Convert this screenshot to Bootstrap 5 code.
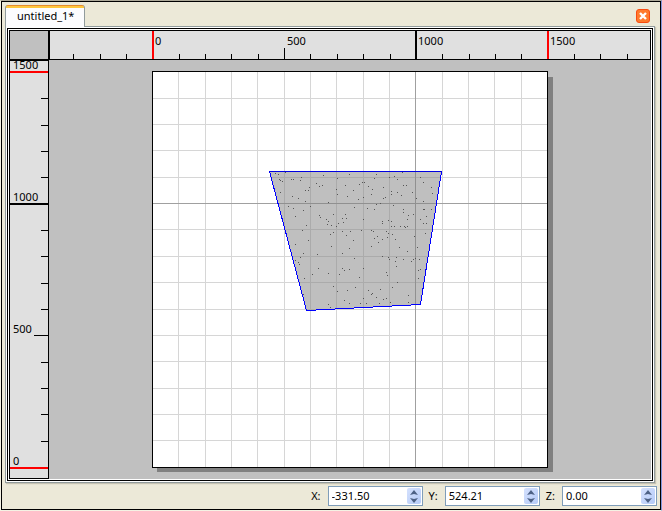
<!DOCTYPE html>
<html lang="en">
<head>
<meta charset="utf-8">
<meta name="viewport" content="width=device-width, initial-scale=1">
<title>untitled_1*</title>
<link href="https://cdn.jsdelivr.net/npm/bootstrap@5.3.0/dist/css/bootstrap.min.css" rel="stylesheet">
<style>
  body { font: 11px/14px "Noto Sans", "Open Sans", sans-serif; color: #000; background: #ece9d8; }
  .app { border-top: 1px solid #aca899; border-left: 1px solid #f4f2e4; border-right: 1px solid #8296dc; border-bottom: 1px solid #f4f2e4; }
  .frame { border: 1px solid #000; padding: 3px; }
  .doc-tab { width: 80px; height: 22px; padding: 0 0 1px 11px; margin-bottom: -1px; z-index: 1; font-size: 11px; line-height: 14px; text-align: left; color: #000; background: linear-gradient(#e68b2c 1px, #ffc73c 1px 3px, #fcfcfe 3px); border: solid #919b9c; border-width: 0 1px; border-radius: 3px 3px 0 0; }
  .close-tab { width: 14px; height: 14px; margin: 4px 7px 0 0; }
  .pane { min-height: 0; margin-right: 2px; background: #fff; border: 1px solid #919b9c; padding: 1px; box-shadow: 1px 1px 1px #c5c2b2; }
  .pane-line { min-height: 0; border: 1px solid #000; padding: 1px; background: #fff; }
  .editor { grid-template: 30px minmax(0, 1fr) / 40px minmax(0, 1fr); }
  .editor svg { display: block; width: 100%; height: 100%; }
  .corner { border: 1px solid #000; background: #c0c0c0; }
  .ruler { background: #e0e0e0; border: solid #000; min-height: 0; }
  .ruler svg { overflow: visible; }
  .ruler-x { border-width: 1px 1px 1px 0; overflow: hidden; }
  .ruler-y { border-width: 0 1px 1px 1px; }
  .view { background: #c0c0c0; min-height: 0; }
  .status { padding-top: 3px; gap: 6px; }
  .field { gap: 7px; }
  .spin { width: 95px; height: 20px; border: 1px solid #7f9db9; background: #fff; padding: 1px; }
  .spin input { width: 0; min-width: 0; font-size: 11px; line-height: 14px; color: #000; padding: 0 0 0 2px; outline: 0; }
  .steps { width: 14px; border-radius: 2px; background: linear-gradient(135deg, #d5e1fd, #b5cbf8); }
  .steps button { line-height: 0; }
</style>
<script src="https://cdn.jsdelivr.net/npm/bootstrap@5.3.0/dist/js/bootstrap.bundle.min.js"></script>
</head>
<body>
<div class="app vh-100 d-flex">
  <div class="frame flex-grow-1 d-flex flex-column">
    <header class="d-flex justify-content-between align-items-start">
      <button class="doc-tab position-relative" type="button">untitled_1*</button>
      <button class="close-tab border-0 bg-transparent p-0 d-flex" type="button" aria-label="Close">
        <svg width="14" height="14" viewBox="0 0 14 14"><rect x=".5" y=".5" width="13" height="13" rx="2.500" fill="#ff7a2c" stroke="#f94b10"/><path d="M4 4l6 6M10 4l-6 6" stroke="#fff" stroke-width="2.400"/></svg>
      </button>
    </header>

    <main class="pane flex-grow-1 d-flex">
      <div class="pane-line flex-grow-1 d-flex">
        <div class="editor flex-grow-1 d-grid">
          <div class="corner"></div>
          <div class="ruler ruler-x">
            <svg shape-rendering="crispEdges">
              <g transform="translate(-49 -31)">
                <path d="M49.500 31v28M73.500 54v5M100.500 54v5M126.500 54v5M179.500 54v5M205.500 54v5M231.500 54v5M258.500 54v5M284.500 48v11M310.500 54v5M337.500 54v5M363.500 54v5M390.500 54v5M442.500 54v5M469.500 54v5M495.500 54v5M521.500 54v5M574.500 54v5M600.500 54v5M627.500 54v5" stroke="#000"/>
                <path d="M416 31v28" stroke="#000" stroke-width="2"/>
                <path d="M153 31v28M548 31v28" stroke="#f00" stroke-width="2"/>
                <text x="155" y="45">0</text><text x="287" y="45">500</text><text x="418" y="45">1000</text><text x="550" y="45">1500</text>
              </g>
            </svg>
          </div>
          <div class="ruler ruler-y">
            <svg shape-rendering="crispEdges">
              <g transform="translate(-10 -60)">
                <path d="M10 60.500h38M41 98.500h7M41 125.500h7M41 151.500h7M41 177.500h7M41 230.500h7M41 256.500h7M41 283.500h7M41 309.500h7M34 335.500h14M41 362.500h7M41 388.500h7M41 414.500h7M41 441.500h7" stroke="#000"/>
                <path d="M10 204h38" stroke="#000" stroke-width="2"/>
                <path d="M10 72h38M10 468h38" stroke="#f00" stroke-width="2"/>
                <text x="13" y="69">1500</text><text x="13" y="201">1000</text><text x="13" y="333">500</text><text x="13" y="465">0</text>
              </g>
            </svg>
          </div>
          <div class="view">
            <svg shape-rendering="crispEdges" role="img" aria-label="Drawing canvas">
              <g transform="translate(-49 -60)">
                <path d="M157 77h396v395H157z" fill="#808080"/>
                <path d="M152.500 71.500h395v396h-395z" fill="#fff"/>
                <path d="M178.500 72v395M205.500 72v395M231.500 72v395M257.500 72v395M284.500 72v395M310.500 72v395M336.500 72v395M363.500 72v395M389.500 72v395M442.500 72v395M468.500 72v395M494.500 72v395M521.500 72v395M153 98.500h394M153 124.500h394M153 150.500h394M153 177.500h394M153 229.500h394M153 256.500h394M153 282.500h394M153 309.500h394M153 335.500h394M153 361.500h394M153 388.500h394M153 414.500h394M153 440.500h394" stroke="#d6d6d6"/>
                <path d="M415.500 72v395M153 203.500h394" stroke="#a0a0a0"/>
                <path d="M152.500 71.500h395v396h-395z" fill="none" stroke="#000"/>
                <path d="M269.500 171.500H441.500L420.500 304.500L306.500 310.500z" fill="#808080" fill-opacity=".5"/>
                <path id="grain" fill="none" stroke="#555"/>
                <path d="M441.500 171.500L420.500 304.500L306.500 310.500L269.500 171.500z" fill="none" stroke="#00f"/>
                <path d="M269 171.500h173" stroke="#0000e0"/>
              </g>
            </svg>
          </div>
        </div>
      </div>
    </main>

    <footer class="status d-flex justify-content-end">
      <div class="field d-flex align-items-center">
        <label for="posX">X:</label>
        <div class="spin d-flex"><input id="posX" class="flex-grow-1 border-0 bg-transparent" value="-331.50">
          <div class="steps d-flex flex-column flex-shrink-0">
            <button type="button" class="border-0 bg-transparent p-0 flex-fill" aria-label="Increase X"><svg width="8" height="5"><path d="M0 5L4 0L8 5L4 4z" fill="#4d6185"/></svg></button>
            <button type="button" class="border-0 bg-transparent p-0 flex-fill" aria-label="Decrease X"><svg width="8" height="5"><path d="M0 0L4 5L8 0L4 1z" fill="#4d6185"/></svg></button>
          </div>
        </div>
      </div>
      <div class="field d-flex align-items-center">
        <label for="posY">Y:</label>
        <div class="spin d-flex"><input id="posY" class="flex-grow-1 border-0 bg-transparent" value="524.21">
          <div class="steps d-flex flex-column flex-shrink-0">
            <button type="button" class="border-0 bg-transparent p-0 flex-fill" aria-label="Increase Y"><svg width="8" height="5"><path d="M0 5L4 0L8 5L4 4z" fill="#4d6185"/></svg></button>
            <button type="button" class="border-0 bg-transparent p-0 flex-fill" aria-label="Decrease Y"><svg width="8" height="5"><path d="M0 0L4 5L8 0L4 1z" fill="#4d6185"/></svg></button>
          </div>
        </div>
      </div>
      <div class="field d-flex align-items-center">
        <label for="posZ">Z:</label>
        <div class="spin d-flex"><input id="posZ" class="flex-grow-1 border-0 bg-transparent" value="0.00">
          <div class="steps d-flex flex-column flex-shrink-0">
            <button type="button" class="border-0 bg-transparent p-0 flex-fill" aria-label="Increase Z"><svg width="8" height="5"><path d="M0 5L4 0L8 5L4 4z" fill="#4d6185"/></svg></button>
            <button type="button" class="border-0 bg-transparent p-0 flex-fill" aria-label="Decrease Z"><svg width="8" height="5"><path d="M0 0L4 5L8 0L4 1z" fill="#4d6185"/></svg></button>
          </div>
        </div>
      </div>
    </footer>
  </div>
</div>
<script>
  // Grain of the filled shape: per tile an origin, then x,y pairs in thirds of a pixel.
  const tiles = [
    [260, 160, "46,40 55,43 76,37 58,58 61,61 67,64 94,58 100,58 121,61 124,52 190,46 268,43 232,55 169,70 178,79 187,76 148,82 136,91 145,91 61,97 97,109 115,115 136,124 205,127 229,88 232,103 256,76 262,109 280,91 298,73 295,118 85,139 100,145 130,151 151,139 106,169 139,196 127,211 178,166 181,172 199,178 205,184 202,193 214,196 220,163 229,199 235,190 247,175 250,187 256,163 259,175 283,142 220,217 211,223 247,214 259,226 271,214"],
    [350, 160, "79,43 73,55 37,67 43,67 28,73 10,91 55,79 67,88 100,82 64,103 40,112 25,118 133,49 142,58 118,52 157,37 124,94 124,103 142,97 160,76 169,76 187,97 154,106 106,112 100,115 211,52 220,67 244,82 247,100 199,115 220,124 79,133 91,130 13,142 52,145 73,148 130,136 160,148 160,157 190,163 175,166 220,148 223,148 244,148 229,169 211,178 220,190 229,190 40,178 97,184 97,190 115,181 124,184 172,178 133,199 124,199 151,199 163,199 166,202 172,199 1,214 34,211 64,211 70,214 73,235 82,229 97,238 109,214 115,220 127,223 136,238 193,229 226,220"],
    [260, 235, "145,16 106,28 130,55 121,67 106,76 115,82 118,88 172,58 214,34 247,55 268,40 280,16 259,1 283,70 175,100 157,118 133,130 205,115 238,118 247,100 253,106 268,103 298,127 130,178 220,154 232,169 262,166 286,157 253,196 205,208 268,205 211,217"],
    [350, 235, "10,16 82,4 73,10 97,13 85,22 112,7 136,13 64,34 193,4 148,37 202,37 172,49 13,70 97,64 115,67 118,73 139,67 136,79 160,73 139,94 184,79 190,73 196,70 208,73 40,100 28,127 109,112 112,121 205,106 211,103 205,130 142,142 16,157 127,157 55,166 67,175 64,178 91,163 79,187 100,193 109,190 40,190 31,205 49,205 88,205 121,202 175,181 175,202"]
  ];
  document.getElementById("grain").setAttribute("d", tiles.map(([ox, oy, list]) =>
    list.split(" ").map(pair => {
      const [x, y] = pair.split(",").map(Number);
      return `M${ox + Math.floor(x / 3)} ${oy + Math.floor(y / 3) + 0.5}h1`;
    }).join("")).join(""));
</script>
</body>
</html>
